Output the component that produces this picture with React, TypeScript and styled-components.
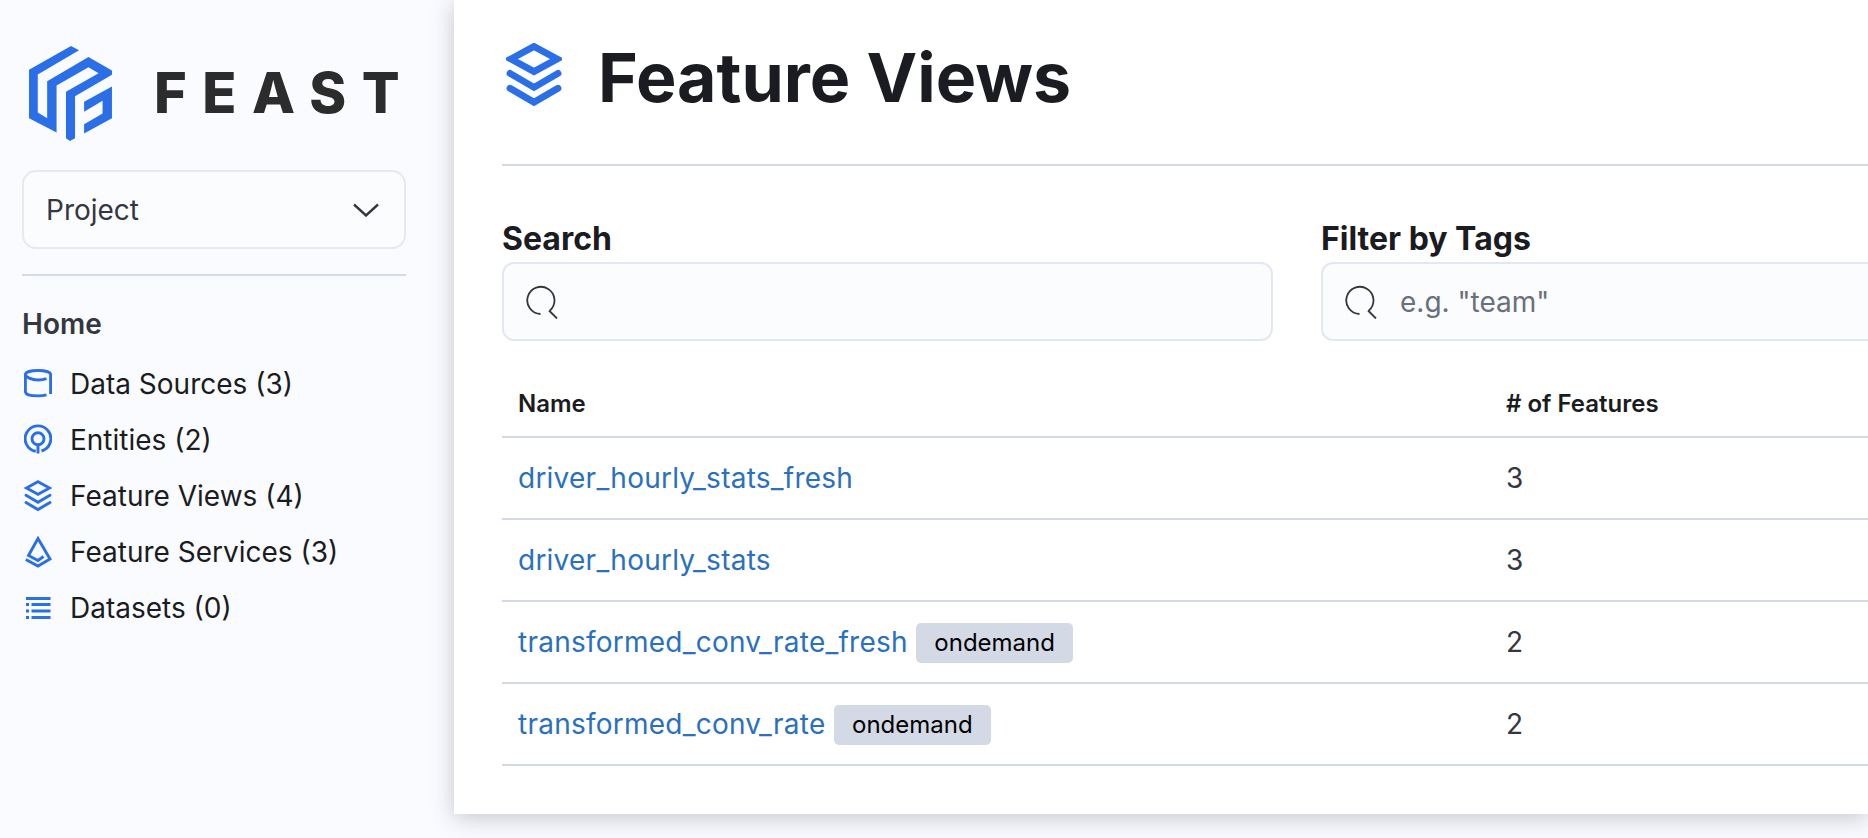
import React from "react";
import styled, { createGlobalStyle } from "styled-components";

const GlobalStyle = createGlobalStyle`
  html, body {
    margin: 0;
    height: 100%;
    overflow: hidden;
    background: #fafbff;
  }
  body {
    font-family: Inter, "Liberation Sans", sans-serif;
    color: #1a1c21;
  }
  * {
    box-sizing: border-box;
  }
`;

const Page = styled.div`
  display: flex;
  width: 1868px;
  height: 838px;
  align-items: flex-start;
`;

const Sidebar = styled.aside`
  flex: 0 0 454px;
  min-width: 0;
  padding: 0 48px 0 22px;
`;

const LogoRow = styled.div`
  height: 170px;
  display: flex;
  align-items: center;
  padding: 16px 0 0 7px;
`;

const LogoMark = styled.svg`
  width: 83px;
  height: 95px;
  flex: none;
`;

const LogoText = styled.span`
  margin-left: 42px;
  font-size: 56px;
  line-height: 1;
  font-weight: 800;
  letter-spacing: 15.5px;
  color: #2c2c2c;
`;

const ProjectSelect = styled.div`
  height: 79px;
  display: flex;
  align-items: center;
  justify-content: space-between;
  padding: 0 25px 0 22px;
  border: 2px solid #e6e9f1;
  border-radius: 14px;
  background: #fbfcfe;
  font-size: 28px;
  color: #343741;
`;

const SideRule = styled.hr`
  height: 2px;
  margin: 25px 0 0;
  border: 0;
  background: #d3dae6;
`;

const NavTitle = styled.div`
  margin: 29px 0 13px 0;
  font-size: 28px;
  line-height: 38px;
  font-weight: 600;
  color: #343741;
`;

const NavList = styled.ul`
  margin: 0;
  padding: 0;
  list-style: none;
`;

const NavItem = styled.li`
  height: 56px;
  display: flex;
  align-items: center;
  gap: 18px;
  padding-left: 2px;
  font-size: 28px;
`;

const NavIcon = styled.svg`
  width: 28px;
  height: 32px;
  flex: none;
  fill: none;
  stroke: #2b6fe8;
  stroke-width: 2.9;
`;

const Main = styled.main`
  flex: 1;
  min-width: 0;
  height: 814px;
  padding-left: 48px;
  background: #fff;
  box-shadow: 0 4px 22px rgba(60, 66, 80, 0.28);
`;

const PageHeader = styled.header`
  height: 166px;
  display: flex;
  align-items: flex-start;
  gap: 36px;
  padding: 43px 0 0 4px;
  border-bottom: 2px solid #d3dae6;
`;

const HeaderIcon = styled.svg`
  width: 56px;
  height: 64px;
  flex: none;
  fill: none;
  stroke: #2b6fe8;
  stroke-width: 3.4;
`;

const Title = styled.h1`
  margin: 0;
  font-size: 68px;
  line-height: 68px;
  font-weight: 700;
  color: #1a1c21;
`;

const Filters = styled.div`
  display: grid;
  grid-template-columns: 771px 1fr;
  column-gap: 48px;
  margin-top: 56px;
`;

const Field = styled.label`
  display: block;
`;

const FieldLabel = styled.div`
  margin-bottom: 6px;
  font-size: 32px;
  line-height: 34px;
  font-weight: 700;
  color: #1a1c21;
`;

const SearchBox = styled.div<{ $open?: boolean }>`
  height: 79px;
  display: flex;
  align-items: center;
  gap: 22px;
  padding: 0 21px;
  border: 2px solid #e3e7f0;
  border-right-width: ${(p) => (p.$open ? "0" : "2px")};
  border-radius: ${(p) => (p.$open ? "12px 0 0 12px" : "12px")};
  background: #fbfcfd;
`;

const SearchGlyph = styled.svg`
  width: 34px;
  height: 34px;
  flex: none;
  fill: none;
  stroke: #343741;
  stroke-width: 1.8;
`;

const SearchInput = styled.input`
  flex: 1;
  min-width: 0;
  border: 0;
  outline: 0;
  padding: 0;
  background: transparent;
  font-family: inherit;
  font-size: 28px;
  color: #343741;

  &::placeholder {
    color: #69707d;
    opacity: 1;
  }
`;

const Table = styled.table`
  width: 100%;
  margin-top: 28px;
  border-collapse: separate;
  border-spacing: 0;
  table-layout: fixed;
`;

const HeadCell = styled.th`
  height: 69px;
  padding: 2px 16px 0;
  border-bottom: 2px solid #d3dae6;
  text-align: left;
  font-size: 24px;
  font-weight: 600;
  color: #1a1c21;

  &:first-child {
    width: 988px;
  }
`;

const BodyCell = styled.td`
  height: 82px;
  padding: 0 16px;
  border-bottom: 2px solid #d3dae6;
  font-size: 28px;
  color: #343741;
`;

const NameRow = styled.div`
  display: flex;
  align-items: center;
  gap: 8px;
`;

const NameLink = styled.a`
  color: #2a70bf;
  letter-spacing: 0.24px;
  text-decoration: none;
`;

const Badge = styled.span`
  height: 40px;
  margin-top: 2px;
  padding: 0 18.5px;
  border-radius: 5px;
  background: #d3dae6;
  font-size: 24px;
  line-height: 40px;
  color: #000;
`;

const Layers = () => (
  <>
    <path d="M14 1.700 25.600 8 14 14.300 2.400 8Z" />
    <path d="M2 15.200 14 22.200 26 15.200M2 22.600 14 29.600 26 22.600" strokeLinecap="round" />
  </>
);

const icons: Record<string, React.ReactNode> = {
  database: (
    <>
      <path d="M1.400 6.500V23.500C1.400 26.600 6 27.900 14 27.900c3 0 6-.3 8.500-1" />
      <path d="M26.600 26V6.500C26.600 4 20.500 2.500 14 2.500S1.400 4 1.400 6.500 7.500 12 14 12c3.200 0 6-.4 8.500-1.300" />
    </>
  ),
  entity: (
    <>
      <path d="M11.800 27.300A12.800 12.800 0 1 1 17.500 27" />
      <circle cx="14" cy="14.700" r="6" />
      <path d="M14 20.500V29.500" />
    </>
  ),
  layers: <Layers />,
  service: (
    <path d="M19.500 20.500 14 24.500 4.500 19.500 14 2.500 26 23 14 30 1.800 23.500" />
  ),
  list: (
    <path
      d="M2 6.500H26.500M2 12.500H5M7.500 12.500H26.500M2 19H5M7.500 19H26.500M2 25.500H5M7.500 25.500H26.500"
    />
  ),
};

const navItems = [
  { icon: "database", label: "Data Sources (3)" },
  { icon: "entity", label: "Entities (2)" },
  { icon: "layers", label: "Feature Views (4)" },
  { icon: "service", label: "Feature Services (3)" },
  { icon: "list", label: "Datasets (0)" },
];

const rows = [
  { name: "driver_hourly_stats_fresh", count: 3, ondemand: false },
  { name: "driver_hourly_stats", count: 3, ondemand: false },
  { name: "transformed_conv_rate_fresh", count: 2, ondemand: true },
  { name: "transformed_conv_rate", count: 2, ondemand: true },
];

const SearchIcon = () => (
  <SearchGlyph viewBox="0 0 34 34">
    <path d="M15.500 29A13.600 13.600 0 1 1 25 25.500" />
    <path d="M24 25.500 32 33.500" />
  </SearchGlyph>
);

const App: React.FC = () => (
  <Page>
    <GlobalStyle />
    <Sidebar>
      <LogoRow>
        <LogoMark viewBox="58 47 247 283">
          <path
            fill="#2b6fe8"
            d="M183 47 207 60 84 132V245L112 262V152L235 80 305 120V133L195 197V322L180 330 168 322V183L265 128 235 110 140 165V305L58 262V118Z"
          />
          <path fill="#2b6fe8" d="M305 168V262L222 308V280L277 248V210L222 243V213Z" />
        </LogoMark>
        <LogoText>FEAST</LogoText>
      </LogoRow>
      <ProjectSelect>
        Project
        <svg width="26" height="14" viewBox="0 0 26 14" fill="none" stroke="#343741" strokeWidth="2.400">
          <path d="M1 1.500 13 12.500 25 1.500" />
        </svg>
      </ProjectSelect>
      <SideRule />
      <NavTitle>Home</NavTitle>
      <NavList>
        {navItems.map((item) => (
          <NavItem key={item.label}>
            <NavIcon viewBox="0 0 28 32">{icons[item.icon]}</NavIcon>
            {item.label}
          </NavItem>
        ))}
      </NavList>
    </Sidebar>
    <Main>
      <PageHeader>
        <HeaderIcon viewBox="0 0 28 32">
          <Layers />
        </HeaderIcon>
        <Title>Feature Views</Title>
      </PageHeader>
      <Filters>
        <Field>
          <FieldLabel>Search</FieldLabel>
          <SearchBox>
            <SearchIcon />
            <SearchInput />
          </SearchBox>
        </Field>
        <Field>
          <FieldLabel>Filter by Tags</FieldLabel>
          <SearchBox $open>
            <SearchIcon />
            <SearchInput placeholder='e.g. "team"' />
          </SearchBox>
        </Field>
      </Filters>
      <Table>
        <thead>
          <tr>
            <HeadCell>Name</HeadCell>
            <HeadCell># of Features</HeadCell>
          </tr>
        </thead>
        <tbody>
          {rows.map((row) => (
            <tr key={row.name}>
              <BodyCell>
                <NameRow>
                  <NameLink href="#">{row.name}</NameLink>
                  {row.ondemand && <Badge>ondemand</Badge>}
                </NameRow>
              </BodyCell>
              <BodyCell>{row.count}</BodyCell>
            </tr>
          ))}
        </tbody>
      </Table>
    </Main>
  </Page>
);

export default App;
